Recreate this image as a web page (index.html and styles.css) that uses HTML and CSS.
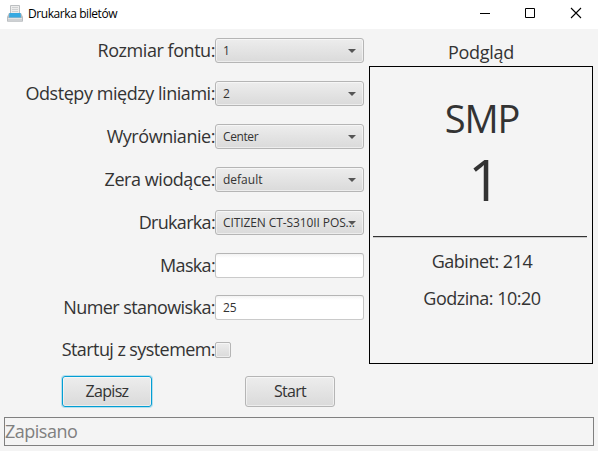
FILE: index.html
```
<!DOCTYPE html>
<html lang="pl">
<head>
<meta charset="utf-8">
<title>Drukarka biletów</title>
<link rel="stylesheet" href="styles.css">
</head>
<body>
<header class="titlebar">
  <svg class="app-icon" width="16" height="17" viewBox="0 0 16 17">
    <path d="M2 8h12l2 4v4q0 .7-.7.700H.7Q0 16.700 0 16v-4z" fill="#b9bdc0"/>
    <path d="M3.500 .5h9v8h-9z" fill="#ededed" stroke="#bcbfc1"/>
    <path d="M5 2.500h6M5 4.500h6M5 6.500h6" stroke="#cfd1d2" fill="none"/>
    <path d="M2.500 8h11l.5 4.500H2z" fill="#36a9e1"/>
    <path d="M1 13.500h14M1 15h14" stroke="#e2e4e5"/>
  </svg>
  <span class="title"><span>Drukarka biletów</span></span>
  <div class="controls">
    <svg width="46" height="29" viewBox="0 0 46 29"><path d="M18 13.500h10" stroke="#000"/></svg>
    <svg width="46" height="29" viewBox="0 0 46 29"><path d="M17.500 8.500h9v9h-9z" stroke="#000" fill="none"/></svg>
    <svg width="44" height="29" viewBox="0 0 44 29"><path d="M17 8l10 10M27 8l-10 10" stroke="#000" stroke-width="1.100"/></svg>
  </div>
</header>
<main class="content">
  <section class="form">
    <label>Rozmiar fontu:</label><div class="combo"><span>1</span><i></i></div>
    <label>Odstępy między liniami:</label><div class="combo"><span>2</span><i></i></div>
    <label>Wyrównianie:</label><div class="combo"><span class="tight">Center</span><i></i></div>
    <label>Zera wiodące:</label><div class="combo"><span>default</span><i></i></div>
    <label class="narrow">Drukarka:</label><div class="combo"><span class="printer">CITIZEN CT-S310II POS...</span><i></i></div>
    <label class="narrow">Maska:</label><div class="field"></div>
    <label class="snug">Numer stanowiska:</label><div class="field">25</div>
    <label class="snug">Startuj z systemem:</label><div class="check"></div>
    <div class="actions"><button class="btn focused">Zapisz</button><button class="btn">Start</button></div>
  </section>
  <section class="preview">
    <h1>Podgląd</h1>
    <div class="ticket">
      <div class="name">SMP</div>
      <div class="number">1</div>
      <div class="rule"></div>
      <div class="room">Gabinet: 214</div>
      <div class="time">Godzina: 10:20</div>
    </div>
  </section>
</main>
<footer class="status"><span>Zapisano</span></footer>
</body>
</html>
```
FILE: styles.css
```
* { box-sizing: border-box; }
body {
  margin: 0;
  width: 598px;
  height: 451px;
  overflow: hidden;
  background: #f4f4f4;
  color: #333;
  font-family: "Open Sans", "Noto Sans", sans-serif;
  font-size: 18px;
  line-height: 24px;
  white-space: nowrap;
}
.titlebar { height: 29px; background: #fff; color: #000; display: flex; }
.app-icon { margin: 5px 5px 0 7px; }
.title { font-size: 12px; line-height: 27px; letter-spacing: -.42px; flex: 1; }
.controls { display: flex; width: 136px; }
.content { display: flex; height: 382px; }
.form {
  width: 364px;
  display: grid;
  grid-template-columns: 215px 149px;
  grid-template-rows: repeat(6, 43px) 41px 44px 39px;
  align-items: center;
}
label { justify-self: end; padding-bottom: 2px; letter-spacing: -.45px; }
.snug { letter-spacing: -.58px; }
.narrow { letter-spacing: -.68px; }
.combo, .field {
  height: 25px;
  border: 1px solid #b5b5b5;
  border-radius: 3px;
  font-size: 12px;
  line-height: 23px;
  padding: 0 7px;
}
.combo {
  display: flex;
  justify-content: space-between;
  align-items: center;
  background: linear-gradient(#ededed, #dadada);
  box-shadow: inset 0 0 0 1px #ffffff80;
}
.combo span { width: 125px; }
.combo i { border: 4px solid transparent; border-top-color: #555; border-bottom: 0; flex: none; }
.printer { letter-spacing: -.1px; }
.tight { letter-spacing: -.4px; }
.field { background: linear-gradient(#f3f3f3, #fff 4px); border-color: #b5b5b5 #c4c4c4 #cacaca; }
.check {
  width: 16px;
  height: 16px;
  border: 1px solid #b5b5b5;
  border-radius: 2px;
  background: linear-gradient(#ededed, #dadada);
  box-shadow: inset 0 0 0 1px #ffffff80;
}
.actions { grid-column: 1 / 3; display: flex; gap: 93px; padding-left: 62px; }
.btn {
  width: 90px;
  height: 31px;
  padding: 0;
  border: 1px solid #b5b5b5;
  border-radius: 3px;
  background: linear-gradient(#ededed, #dadada);
  box-shadow: inset 0 0 0 1px #ffffff80;
  color: #333;
  font: 16px/29px "Open Sans", "Noto Sans", sans-serif;
  letter-spacing: -.7px;
}
.focused { border-color: #039ed3; box-shadow: 0 0 0 1px #b5dfee, inset 0 0 0 1px #ffffff80; }
.preview { width: 224px; margin-left: 5px; text-align: center; }
h1 { margin: 0; padding-top: 11px; height: 37px; font-size: 18px; line-height: 24px; font-weight: 400; letter-spacing: -.3px; }
.ticket { height: 298px; border: 1px solid #000; }
.name { margin-top: 25px; height: 52px; padding-left: 2px; font-size: 38px; line-height: 52px; letter-spacing: -1.2px; }
.number { height: 76px; margin-top: -3px; padding-left: 7px; font-size: 57px; line-height: 76px; }
.rule { height: 1px; margin: 19px 5px 0 3px; background: #333; box-shadow: 0 1px #ccc; }
.room { margin-top: 12px; height: 24px; padding-left: 2px; letter-spacing: -.5px; }
.time { margin-top: 13px; height: 24px; padding-left: 2px; letter-spacing: -.5px; }
.status { margin: 6px 4px 0; height: 29px; border: 1px solid #808080; color: #808080; line-height: 27px; letter-spacing: -.5px; }
```
